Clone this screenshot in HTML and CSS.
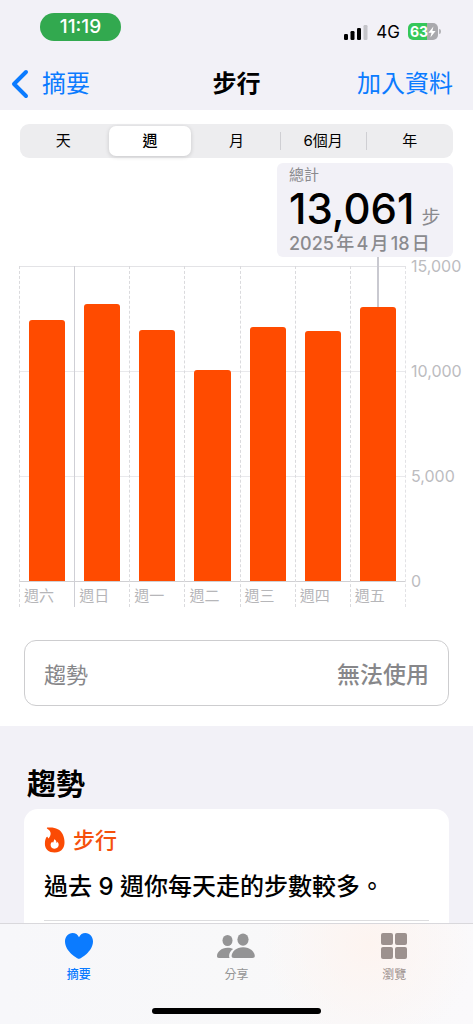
FILE: index.html
```html
<!DOCTYPE html>
<html lang="zh-Hant">
<head>
<meta charset="utf-8">
<meta name="viewport" content="width=device-width, initial-scale=1">
<title>步行</title>
<link rel="stylesheet" href="styles.css">
</head>
<body>
<div class="app">
  <header class="header">
    <div class="status">
      <span class="status-time">11:19</span>
      <div class="status-right">
        <svg class="signal" viewBox="0 0 24 16" aria-hidden="true">
          <rect x="0" y="10" width="4" height="6" rx="1.2"/>
          <rect x="6.5" y="7" width="4" height="9" rx="1.2"/>
          <rect x="13" y="4" width="4" height="12" rx="1.2"/>
          <rect class="signal-off" x="19.5" y="1" width="4" height="15" rx="1.2"/>
        </svg>
        <span class="network">4G</span>
        <span class="battery">
          <span class="battery-body">63<svg class="bolt" viewBox="0 0 8 12" aria-hidden="true"><path d="M5.4 0.6 0.4 6.8h3.1L2.4 11.4 7.6 5H4.4z"/></svg></span>
          <span class="battery-nub"></span>
        </span>
      </div>
    </div>
    <nav class="nav">
      <a class="nav-back" href="#summary">
        <svg class="chevron" viewBox="0 0 18 30" aria-hidden="true"><path d="M15 3 3 15l12 12"/></svg>
        摘要
      </a>
      <h1 class="nav-title">步行</h1>
      <a class="nav-add" href="#add">加入資料</a>
    </nav>
  </header>

  <main class="content">
    <section class="panel">
      <div class="segments" role="radiogroup" aria-label="時間範圍">
        <label class="segment"><input type="radio" name="range"><span>天</span></label>
        <label class="segment"><input type="radio" name="range" checked><span>週</span></label>
        <label class="segment"><input type="radio" name="range"><span>月</span></label>
        <label class="segment divided"><input type="radio" name="range"><span>6個月</span></label>
        <label class="segment divided"><input type="radio" name="range"><span>年</span></label>
      </div>

      <div class="callout">
        <p class="callout-label">總計</p>
        <p class="callout-value">13,061<span class="callout-unit">步</span></p>
        <p class="callout-date">2025年4月18日</p>
      </div>

      <div class="chart">
        <div class="plot">
          <div class="gridlines"><i></i><i></i><i></i></div>
          <div class="columns">
            <div class="column"><div class="track"><div class="bar" style="height:82.8%"></div></div><span class="day">週六</span></div>
            <div class="column week-start"><div class="track"><div class="bar" style="height:87.9%"></div></div><span class="day">週日</span></div>
            <div class="column"><div class="track"><div class="bar" style="height:79.6%"></div></div><span class="day">週一</span></div>
            <div class="column"><div class="track"><div class="bar" style="height:67%"></div></div><span class="day">週二</span></div>
            <div class="column"><div class="track"><div class="bar" style="height:80.6%"></div></div><span class="day">週三</span></div>
            <div class="column"><div class="track"><div class="bar" style="height:79.4%"></div></div><span class="day">週四</span></div>
            <div class="column"><div class="track"><div class="bar selected" style="height:87.1%"></div></div><span class="day">週五</span></div>
          </div>
        </div>
        <div class="axis"><span>15,000</span><span>10,000</span><span>5,000</span><span>0</span></div>
      </div>

      <button class="trend-button" type="button"><span>趨勢</span><span class="trend-state">無法使用</span></button>
    </section>

    <section class="trends">
      <h2 class="trends-title">趨勢</h2>
      <article class="card">
        <h3 class="card-head">
          <svg class="flame" viewBox="0 0 20 26" aria-hidden="true">
            <path d="M2.800.6C9.500-.3 15.800 1.700 18.200 7.200c2.300 5 2.400 10.600.3 14C16.700 24.100 13.700 25.500 10 25.500 4.300 25.500.4 22.200.4 17c0-2.800.5-4.900 1.200-6.300.5-1 1.100-1.200 1.500-.8.4.4.3 1 .7 1.700C5.600 9.900 6.600 7.700 5.900 5.200 5.400 3.500 4.200 2.700 2.800 1.800 2.200 1.400 2.200.8 2.800.6z"/>
            <path class="flame-core" d="M9.700 12.200c2 1 2.400 2.300 2.300 3.800.6-.2.800-.8 1-1.300.8 1 1.200 2 1.200 3.100 0 2.300-1.700 3.900-4 3.900-2.400 0-4.100-1.500-4.100-3.700 0-1.600.7-2.800 1.800-3.300.1.500.3.900.7 1.100.6-1.200.9-2.200 1.100-3.600z"/>
          </svg>
          步行
        </h3>
        <p class="card-text">過去 9 週你每天走的步數較多。</p>
        <hr class="card-rule">
      </article>
    </section>
  </main>

  <footer class="tabbar">
    <nav class="tabs">
      <a class="tab active" href="#summary">
        <svg class="tab-icon" viewBox="0 0 28 26" aria-hidden="true"><path d="M14 26C12.500 26 0 18.500 0 8.600 0 3.600 3.200 0 7.600 0c2.900 0 5.200 1.600 6.400 4.200C15.200 1.600 17.500 0 20.400 0 24.800 0 28 3.600 28 8.600 28 18.500 15.500 26 14 26z"/></svg>
        <span>摘要</span>
      </a>
      <a class="tab" href="#share">
        <svg class="tab-icon people" viewBox="0 0 38 26" aria-hidden="true">
          <ellipse cx="10.500" cy="7.500" rx="5" ry="5.500"/>
          <path d="M2 25C.5 25 0 24.300 0 23c0-4 4.300-8.300 10.500-8.300 2.100 0 4 .4 5.600 1.300-2.700 1.900-4 4.500-4 7 0 .8.100 1.500.5 2z"/>
          <ellipse cx="26" cy="6.600" rx="5.600" ry="6.200"/>
          <path d="M17 25c-1.700 0-2.400-.7-2.400-2 0-4 4.500-8.700 11.500-8.700S37.800 19 37.800 23c0 1.300-.8 2-2.500 2z"/>
        </svg>
        <span>分享</span>
      </a>
      <a class="tab browse" href="#browse">
        <svg class="tab-icon" viewBox="0 0 26 26" aria-hidden="true"><rect width="12" height="12" rx="2"/><rect x="14" width="12" height="12" rx="2"/><rect y="14" width="12" height="12" rx="2"/><rect x="14" y="14" width="12" height="12" rx="2"/></svg>
        <span>瀏覽</span>
      </a>
    </nav>
    <div class="home-indicator"></div>
  </footer>
</div>
</body>
</html>
```
FILE: styles.css
```css
* { box-sizing: border-box; }
body, h1, h2, h3, p { margin: 0; }
body {
  font-family: Inter, "Noto Sans CJK TC", sans-serif;
  color: #000;
  background: #f2f1f7;
}
a { color: inherit; text-decoration: none; }

.app { display: flex; flex-direction: column; height: 100vh; }

.header { flex: none; background: #f2f1f7; padding-top: 13px; }
.status { display: flex; justify-content: space-between; align-items: center; padding: 0 32px 0 40px; }
.status-time {
  width: 81px;
  border-radius: 14px;
  background: #32a94f;
  color: #fff;
  font-size: 19px;
  font-weight: 500;
  line-height: 28px;
  text-align: center;
}
.status-right { display: flex; align-items: center; gap: 8px; padding-top: 9px; }
.signal { width: 24px; height: 16px; }
.signal-off { fill: #c4c4c9; }
.network { font-size: 17px; font-weight: 400; line-height: 18px; }
.battery { display: flex; align-items: center; gap: 1px; }
.battery-body {
  display: flex;
  align-items: center;
  justify-content: center;
  width: 30px;
  height: 17px;
  border-radius: 5px;
  background: linear-gradient(90deg, #35c759 63%, #a9a9ad 63%);
  color: #fff;
  font-size: 14px;
  font-weight: 700;
}
.bolt { width: 8px; height: 12px; fill: #fff; }
.battery-nub { width: 2px; height: 5px; border-radius: 0 2px 2px 0; background: #b4b4b8; }

.nav {
  display: grid;
  grid-template-columns: 1fr auto 1fr;
  align-items: center;
  padding: 12px 20px 10px;
  margin-top: 15px;
  font-size: 24px;
  line-height: 32px;
}
.nav-back { display: flex; align-items: center; gap: 13px; margin-left: -9px; color: #0b7bff; }
.chevron { width: 18px; height: 30px; fill: none; stroke: currentColor; stroke-width: 4; stroke-linecap: round; stroke-linejoin: round; }
.nav-title { font-size: 24px; font-weight: 700; line-height: 32px; }
.nav-add { justify-self: end; color: #0b7bff; }

.content { flex: 1; min-height: 0; overflow: hidden auto; scrollbar-width: none; }
.panel { background: #fff; padding: 14px 20px 20px; display: flex; flex-direction: column; }

.segments { display: grid; grid-template-columns: repeat(5, 1fr); height: 34px; border-radius: 9px; background: #ededef; }
.segment { position: relative; display: flex; padding: 2px; }
.segment input { position: absolute; opacity: 0; margin: 0; }
.segment span { flex: 1; border-radius: 7px; font-size: 15px; line-height: 30px; text-align: center; }
.segment input:checked + span { background: #fff; box-shadow: 0 1px 4px rgba(0, 0, 0, .16); font-weight: 500; }
.divided::before { content: ""; position: absolute; left: 0; top: 8px; bottom: 8px; width: 1px; background: #cfcfd3; }

.callout {
  align-self: flex-end;
  width: 176px;
  margin-top: 5px;
  padding: 2px 12px;
  border-radius: 6px;
  background: #f2f1f7;
  color: #8a8a8e;
}
.callout-label { font-size: 15px; line-height: 20px; }
.callout-value { display: flex; align-items: baseline; height: 48px; color: #000; font-size: 42px; font-weight: 500; line-height: 48px; white-space: nowrap; }
.callout-unit { margin-left: 7px; color: #8a8a8e; font-size: 19px; font-weight: 400; line-height: 24px; }
.callout-date { font-size: 18px; font-weight: 500; line-height: 22px; white-space: nowrap; text-autospace: normal; }

.chart { display: flex; gap: 5px; margin: 9px -10px 0 -1px; }
.plot { flex: 1; display: grid; }
.gridlines, .columns { grid-area: 1 / 1; }
.gridlines { display: grid; grid-template-rows: repeat(3, 105px); align-content: start; border-top: 1px solid #e3e3e6; }
.gridlines i { border-bottom: 1px solid #e9e9ec; }
.gridlines i:last-child { border-color: #d0d0d3; }
.columns { display: grid; grid-template-columns: repeat(7, 1fr); border-right: 1px dashed #e2e2e5; }
.column { border-left: 1px dashed #dadadd; }
.week-start { border-left: 1px solid #cfcfd5; }
.track { display: flex; align-items: flex-end; height: 315px; padding: 0 9px; }
.bar { position: relative; flex: 1; border-radius: 3px 3px 0 0; background: #ff4b00; }
.selected::before { content: ""; position: absolute; left: 50%; bottom: 100%; width: 2px; height: 50px; margin-left: -1px; background: #c9c9d0; }
.day { display: block; padding: 4px 0 0 4px; color: #b6b6b9; font-size: 15px; line-height: 22px; }
.axis {
  display: flex;
  flex-direction: column;
  justify-content: space-between;
  width: 52px;
  height: 335px;
  margin-top: -10px;
  color: #bcbcbf;
  font-size: 16px;
  line-height: 20px;
}

.trend-button {
  display: flex;
  justify-content: space-between;
  align-items: center;
  height: 66px;
  margin: 33px 4px 0;
  padding: 0 19px;
  border: 1px solid #cdcdcf;
  border-radius: 12px;
  background: #fff;
  color: #87878a;
  font: inherit;
  font-size: 22px;
}
.trend-state { font-size: 23px; font-weight: 500; }

.trends { padding: 39px 24px 0; background: #f2f1f7; }
.trends-title { padding-left: 3px; font-size: 29px; font-weight: 700; line-height: 40px; }
.card { margin-top: 4px; padding: 16px 20px 24px; border-radius: 14px; background: #fff; }
.card-head { display: flex; align-items: center; gap: 8px; color: #f5500c; font-size: 22px; font-weight: 500; line-height: 30px; }
.flame { width: 21px; height: 26px; fill: #fb4b04; }
.flame-core { fill: #fff; }
.card-text { margin-top: 14px; font-size: 24px; font-weight: 500; line-height: 36px; white-space: nowrap; }
.card-rule { margin: 15px 0 0; border: 0; border-top: 1px solid #dcdcde; }

.tabbar {
  flex: none;
  border-top: 1px solid #d9d8dc;
  background: radial-gradient(circle at 78% 20%, #fdf4f0, transparent 28%), linear-gradient(90deg, #f7f7fa, #f8f8f9 50%, #faf9fb);
}
.tabs { display: grid; grid-template-columns: repeat(3, 1fr); }
.tab { display: flex; flex-direction: column; align-items: center; gap: 7px; padding-top: 9px; color: #949495; fill: currentColor; font-size: 12px; line-height: 18px; }
.tab-icon { width: 28px; height: 26px; }
.people { width: 38px; }
.browse { color: #9c918e; }
.active { color: #0b7bff; font-weight: 500; }
.home-indicator { width: 169px; height: 6px; margin: 24px auto 10px; border-radius: 3px; background: #000; }
```
